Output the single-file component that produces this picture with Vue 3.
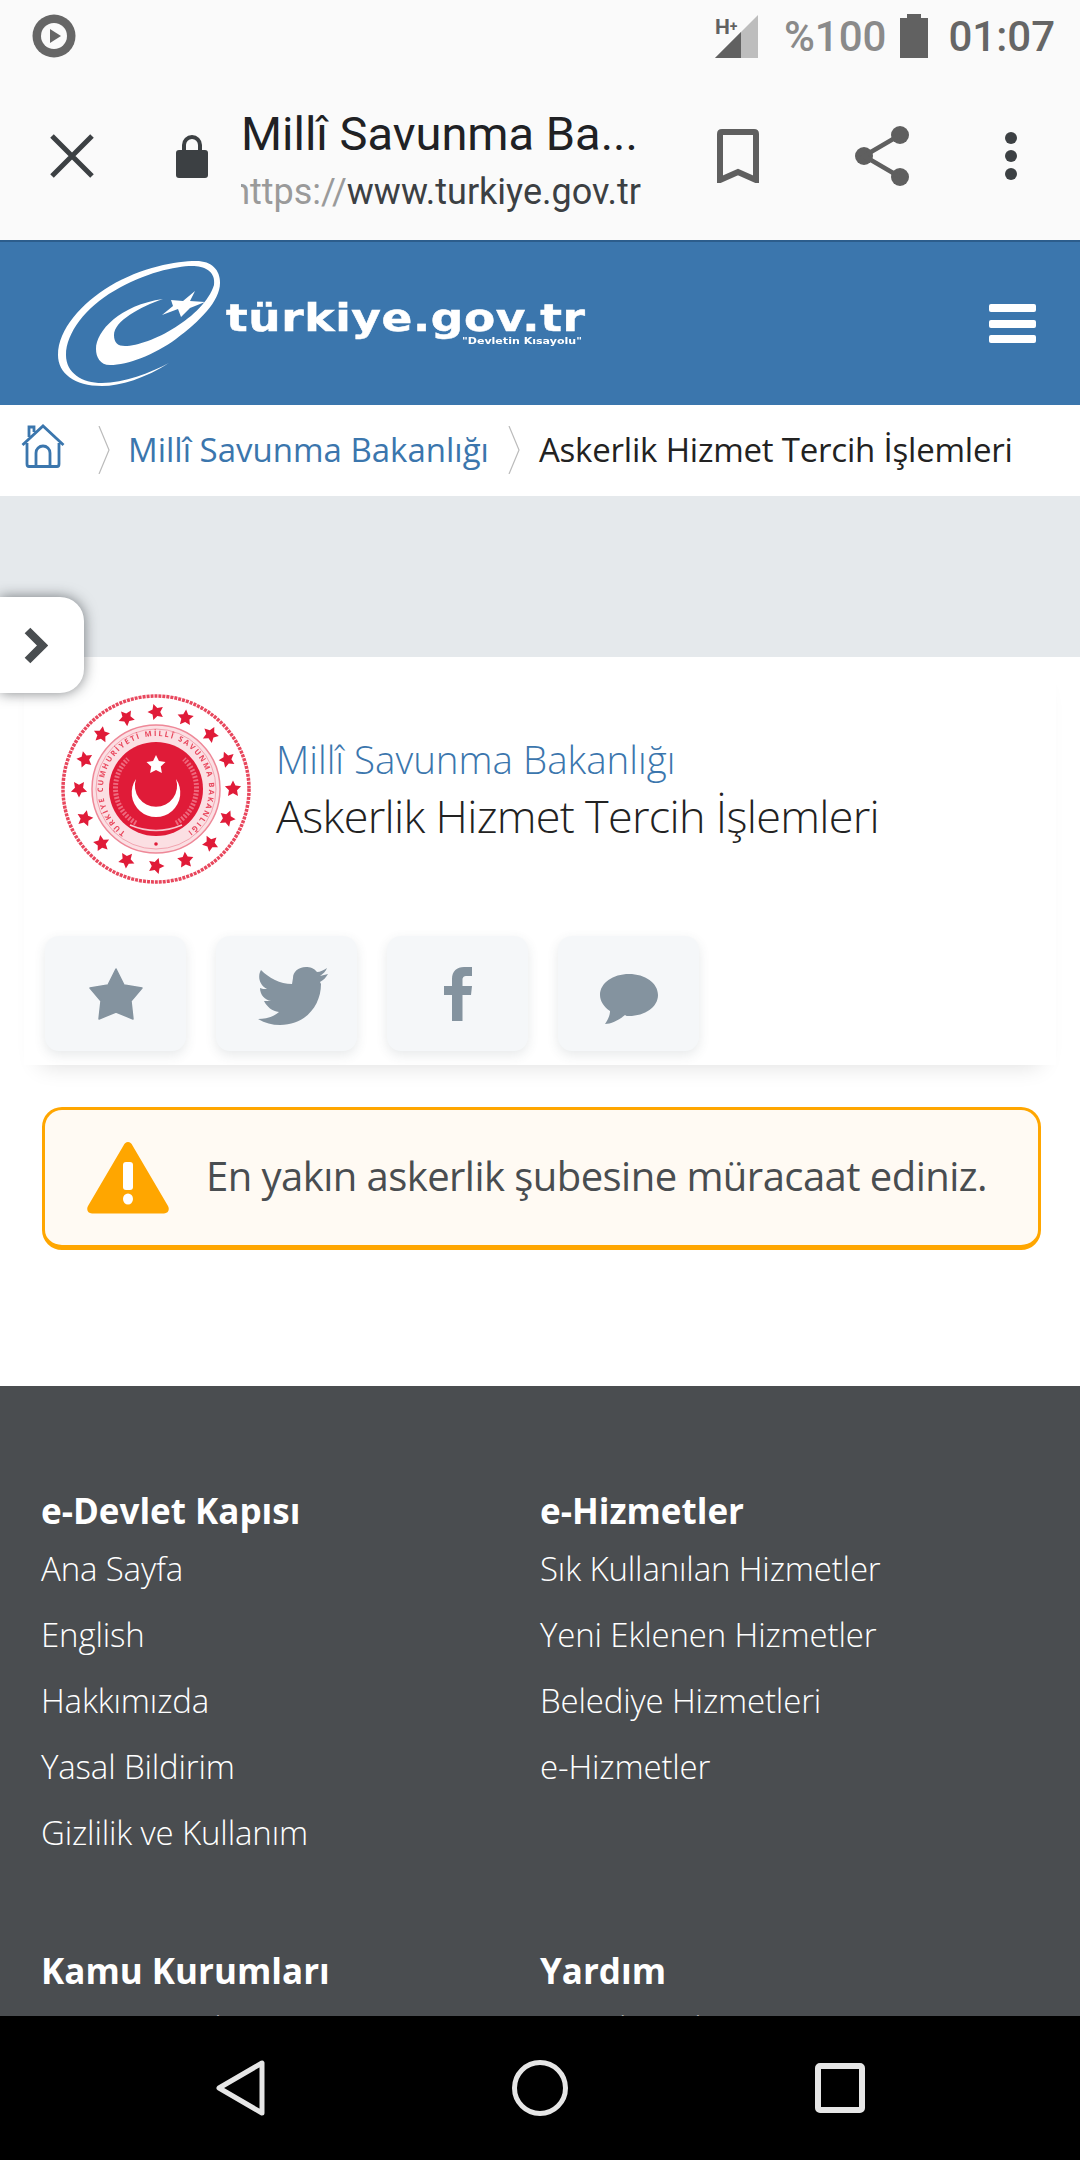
<template>
  <div class="screen">
    <!-- android status bar -->
    <div class="status-bar">
      <svg class="play-icon" width="44" height="44" viewBox="0 0 44 44">
        <circle cx="22" cy="22" r="21.5" fill="#666" />
        <circle cx="22" cy="22" r="13" fill="#fafafa" />
        <path d="M18 15 L29 22 L18 29 Z" fill="#666" />
      </svg>
      <div class="status-right">
        <svg width="43" height="43" viewBox="0 0 43 43">
          <path d="M43 0 V43 H0 Z" fill="#bdbdbd" />
          <path d="M26 17 V43 H0 Z" fill="#616161" />
          <text x="0" y="19" class="net-text">H<tspan class="net-plus" dy="-3">+</tspan></text>
        </svg>
        <span class="battery-text">%100</span>
        <svg class="battery" width="28" height="44" viewBox="0 0 28 44">
          <path d="M7 0 H21 V4 H28 V44 H0 V4 H7 Z" fill="#616161" />
        </svg>
        <span class="clock">01:07</span>
      </div>
    </div>

    <!-- custom tab toolbar -->
    <div class="toolbar">
      <svg class="close-icon" width="46" height="46" viewBox="0 0 46 46">
        <path d="M3 3 L43 43 M43 3 L3 43" stroke="#3c4043" stroke-width="5" fill="none" />
      </svg>
      <svg class="lock-icon" width="32" height="44" viewBox="0 0 32 44">
        <path d="M8 18 V11 A8 8 0 0 1 24 11 V18" stroke="#3c4043" stroke-width="4" fill="none" />
        <rect x="0" y="16" width="32" height="28" rx="3" fill="#3c4043" />
      </svg>
      <div class="tab-title">
        <div class="tab-name">Millî Savunma Ba...</div>
        <div class="tab-url"><span class="url-scheme">https://</span>www.turkiye.gov.tr</div>
      </div>
      <svg class="bookmark" width="42" height="54" viewBox="0 0 42 54">
        <path d="M3 51 V5 Q3 3 5 3 H37 Q39 3 39 5 V51 L21 43 Z" stroke="#5f5f5f" stroke-width="6" fill="none" stroke-linejoin="miter" />
      </svg>
      <svg class="share" width="54" height="60" viewBox="0 0 54 60">
        <circle cx="45" cy="9" r="9" fill="#5f5f5f" />
        <circle cx="9" cy="30" r="9" fill="#5f5f5f" />
        <circle cx="45" cy="51" r="9" fill="#5f5f5f" />
        <path d="M45 9 L9 30 L45 51" stroke="#5f5f5f" stroke-width="4.500" fill="none" />
      </svg>
      <svg class="dots" width="12" height="48" viewBox="0 0 12 48">
        <circle cx="6" cy="6" r="6" fill="#3c4043" />
        <circle cx="6" cy="24" r="6" fill="#3c4043" />
        <circle cx="6" cy="42" r="6" fill="#3c4043" />
      </svg>
    </div>

    <div class="page">
      <header class="site-header">
        <div class="logo">
          <svg width="162" height="125" viewBox="0 0 162 125">
            <path d="M111 102 C88 117 62 125 44 125 C16 125 0 112 0 94 C0 68 24 42 52 25 C84 6 118 0 138 0 C154 0 162 9 162 22 C162 40 142 60 118 78 C96 94 70 104 52 104 C42 104 38 96 38 88 C38 70 62 44 105 38 C82 46 56 60 56 74 C56 82 60 85 67 85 C92 85 146 56 156 24 C158 10 146 5 134 5 C118 5 86 12 56 30 C28 46 8 72 8 94 C8 112 24 122 44 122 C66 122 92 112 111 102 Z" fill="#fff" />
            <path d="M137 30 L132 40 L147 41 L132 47 L123 56 L120 48 L104 54 L115 45 L113 39 L125 40 Z" fill="#fff" />
          </svg>
          <div class="logo-text">
            <div class="logo-name">türkiye.gov.tr</div>
            <div class="logo-slogan">"Devletin Kısayolu"</div>
          </div>
        </div>
        <div class="hamburger">
          <span></span><span></span><span></span>
        </div>
      </header>

      <nav class="breadcrumb">
        <svg class="home-icon" width="44" height="44" viewBox="0 0 44 44">
          <path d="M1.500 21 L22 2 L42.500 21 M8 13 V3 H13 V8 M6 19 V40 Q6 42.500 8 42.500 H36 Q38 42.500 38 40 V19 M15 42 V29 A7 7 0 0 1 29 29 V42" stroke="#3b76ad" stroke-width="2.800" fill="none" />
        </svg>
        <svg class="crumb-sep" width="12" height="48" viewBox="0 0 12 48"><path d="M1 0 L11 24 L1 48" stroke="#bbb" stroke-width="1.200" fill="none" /></svg>
        <a class="crumb-link">Millî Savunma Bakanlığı</a>
        <svg class="crumb-sep sep-two" width="12" height="48" viewBox="0 0 12 48"><path d="M1 0 L11 24 L1 48" stroke="#bbb" stroke-width="1.200" fill="none" /></svg>
        <span class="crumb-current">Askerlik Hizmet Tercih İşlemleri</span>
      </nav>

      <div class="gray-band"></div>

      <section class="service">
        <div class="side-toggle">
          <svg width="24" height="37" viewBox="0 0 24 37">
            <path d="M3.500 3.500 L18.500 18.500 L3.500 33.500" stroke="#494d50" stroke-width="8" fill="none" />
          </svg>
        </div>

        <div class="service-head">
          <svg class="emblem" width="192" height="192" viewBox="0 0 192 192">
            <circle cx="96" cy="96" r="93" fill="#fff" stroke="#e8475d" stroke-width="3.500" stroke-dasharray="3 1" />
            <path v-for="s in outerStars" :key="s.id" :d="s.d" fill="#e01b38" />
            <circle cx="96" cy="96" r="64" fill="#fbdfe3" stroke="#ee8898" stroke-width="1.500" />
            <circle cx="96" cy="96" r="60" fill="none" stroke="#f2a5b1" stroke-width="1" />
            <defs>
              <path id="ring-text" d="M65.600 139.400 A53 53 0 1 1 126.400 139.400" />
            </defs>
            <text class="ring-text">
              <textPath href="#ring-text" textLength="266">TÜRKİYE CUMHURİYETİ MİLLÎ SAVUNMA BAKANLIĞI</textPath>
            </text>
            <circle cx="96" cy="151" r="1.800" fill="#e01b38" />
            <circle cx="96" cy="96" r="47" fill="#e01b38" />
            <path class="wreath" d="M76 130 A40 40 0 0 1 68 66" />
            <path class="wreath" d="M116 130 A40 40 0 0 0 124 66" />
            <path d="M70 132 Q96 143 122 132" stroke="#f7c6ce" stroke-width="1.500" fill="none" />
            <path :d="emblemStar" fill="#fff" />
            <path d="M76 86 A24.300 24.300 0 1 0 116 86 A21.100 21.100 0 1 1 76 86 Z" fill="#fff" />
          </svg>
          <div class="service-titles">
            <div class="agency">Millî Savunma Bakanlığı</div>
            <h1 class="service-name">Askerlik Hizmet Tercih İşlemleri</h1>
          </div>
        </div>

        <div class="action-row">
          <div class="action-btn">
            <svg width="54" height="52" viewBox="0 0 54 52">
              <path d="M27 1 L35 17 L53 20 L42 33 L44 51 L27 44 L10 51 L12 33 L1 20 L19 17 Z" fill="#84939f" stroke="#84939f" stroke-width="1.500" stroke-linejoin="round" />
            </svg>
          </div>
          <div class="action-btn">
            <svg class="bird" width="71" height="58" viewBox="0 0 71 58">
              <path d="M69 1 C66 3 62 5 59 5 C56 1 52 0 48 0 C40 0 35 5 35 11 L34 17 C22 17 11 11 3 3 C0 8 0 17 9 22 C6 22 4 22 2 21 C2 28 7 33 13 34 L6 34 C9 40 14 44 21 45 C17 49 9 52 0 52 C7 56 14 58 22 58 C48 58 63 38 63 17 L62 15 C66 13 68 10 70 7 L62 9 C65 7 68 4 69 1 Z" fill="#84939f" />
            </svg>
          </div>
          <div class="action-btn">
            <svg width="30" height="54" viewBox="0 0 30 54">
              <path d="M9 54 V28 H1 V19 H9 V12 C9 4 14 0 21 0 H29 V9 H24 C20.500 9 19.500 10.500 19.500 13 V19 H29 L28 28 H19.500 V54 Z" fill="#84939f" />
            </svg>
          </div>
          <div class="action-btn">
            <svg class="bubble" width="58" height="50" viewBox="0 0 58 50">
              <path d="M29 0 C45 0 58 9 58 21 C58 33 45 42 29 42 C27 42 26 42 25 41 C19 46 11 50 5 50 C8 46 10 41 10 37 C4 33 0 27 0 21 C0 9 13 0 29 0 Z" fill="#84939f" />
            </svg>
          </div>
        </div>
      </section>

      <div class="alert-wrap">
        <div class="alert">
          <svg class="alert-icon" width="82" height="72" viewBox="0 0 82 72">
            <path d="M41 0 C43 0 44.500 1.500 45.500 3.500 L81 64 C83 68 81 71.500 77 71.500 H5 C1 71.500 -1 68 1 64 L36.500 3.500 C37.500 1.500 39 0 41 0 Z" fill="#ffa600" />
            <rect x="36" y="20" width="10" height="28" rx="3" fill="#fff" />
            <ellipse cx="41" cy="57" rx="5" ry="5.500" fill="#fff" />
          </svg>
          <span class="alert-text">En yakın askerlik şubesine müracaat ediniz.</span>
        </div>
      </div>

      <footer class="site-footer">
        <div v-for="col in footerCols" :key="col.title" class="footer-col">
          <h4 class="footer-title">{{ col.title }}</h4>
          <a v-for="link in col.links" :key="link" class="footer-link">{{ link }}</a>
        </div>
      </footer>
    </div>

    <!-- android nav bar -->
    <div class="nav-bar">
      <svg width="50" height="56" viewBox="0 0 50 56">
        <path d="M46 3 V53 L3 28 Z" stroke="#e6e6e6" stroke-width="5" stroke-linejoin="round" fill="none" />
      </svg>
      <svg width="56" height="56" viewBox="0 0 56 56">
        <circle cx="28" cy="28" r="25.500" stroke="#e6e6e6" stroke-width="5" fill="none" />
      </svg>
      <svg width="50" height="50" viewBox="0 0 50 50">
        <rect x="3" y="3" width="44" height="44" rx="2" stroke="#e6e6e6" stroke-width="6" fill="none" />
      </svg>
    </div>
  </div>
</template>

<script setup>
const starPath = (cx, cy, r, rot = -90) => {
  let d = ''
  for (let i = 0; i < 10; i++) {
    const rad = i % 2 ? r * 0.5 : r
    const a = ((rot + i * 36) * Math.PI) / 180
    d += (i ? 'L' : 'M') + (cx + rad * Math.cos(a)).toFixed(2) + ' ' + (cy + rad * Math.sin(a)).toFixed(2) + ' '
  }
  return d + 'Z'
}

// emblemdeki 16 yildiz
const outerStars = Array.from({ length: 16 }, (_, i) => {
  const a = (i * 22.5 * Math.PI) / 180
  return {
    id: i,
    d: starPath(96 + 77 * Math.cos(a), 96 + 77 * Math.sin(a), 8.5, -90 + i * 22.5)
  }
})
const emblemStar = starPath(96, 72, 10)

const footerCols = [
  {
    title: 'e-Devlet Kapısı',
    links: ['Ana Sayfa', 'English', 'Hakkımızda', 'Yasal Bildirim', 'Gizlilik ve Kullanım']
  },
  {
    title: 'e-Hizmetler',
    links: ['Sık Kullanılan Hizmetler', 'Yeni Eklenen Hizmetler', 'Belediye Hizmetleri', 'e-Hizmetler']
  },
  { title: 'Kamu Kurumları', links: ['Tüm Kurumlar'] },
  { title: 'Yardım', links: ['Genel Yardım'] }
]
</script>

<style>
html, body {
  margin: 0;
  background: #fff;
}
</style>

<style scoped>
.screen {
  width: 1080px;
  height: 2160px;
  display: flex;
  flex-direction: column;
  overflow: hidden;
  font-family: "Open Sans", "Liberation Sans", sans-serif;
}
.status-bar {
  height: 72px;
  flex: none;
  display: flex;
  align-items: center;
  justify-content: space-between;
  padding: 0 25px 0 32px;
  background: #fafafa;
  font-family: Roboto, sans-serif;
}
.status-right {
  display: flex;
  align-items: center;
}
.net-text {
  font: 700 21px Roboto, sans-serif;
  fill: #616161;
}
.net-plus {
  font-size: 14px;
}
.battery-text {
  font-size: 42px;
  font-weight: 500;
  margin-left: 26px;
  color: #8a8a8a;
}
.battery {
  margin-left: 14px;
}
.clock {
  font-size: 42px;
  font-weight: 500;
  margin-left: 20px;
  color: #666;
}
.toolbar {
  height: 168px;
  flex: none;
  box-sizing: border-box;
  display: flex;
  align-items: center;
  padding-left: 49px;
  background: #fafafa;
}
.lock-icon {
  margin-left: 81px;
}
.tab-title {
  width: 400px;
  margin-left: 33px;
  margin-top: 8px;
  overflow: hidden;
  font-family: Roboto, sans-serif;
}
.tab-name {
  font-size: 47px;
  line-height: 56px;
  color: #202124;
  white-space: nowrap;
}
.tab-url {
  width: 400px;
  margin-top: 8px;
  font-size: 36px;
  line-height: 44px;
  color: #3c4043;
  white-space: nowrap;
  display: flex;
  justify-content: flex-end;
  overflow: hidden;
}
.url-scheme {
  color: #9a9a9a;
}
.bookmark {
  margin-left: 76px;
}
.share {
  margin-left: 96px;
}
.dots {
  margin-left: 96px;
}
.page {
  flex: 1;
  min-height: 0;
  overflow: hidden;
}
.site-header {
  height: 165px;
  box-sizing: border-box;
  display: flex;
  align-items: center;
  justify-content: space-between;
  padding: 0 44px 0 58px;
  background: #3b76ad;
  border-top: 2px solid #2c5d8c;
}
.logo {
  display: flex;
  align-items: center;
}
.logo-text {
  margin-left: 6px;
  margin-top: 2px;
  color: #fff;
  transform: scaleX(1.228);
  transform-origin: left center;
}
.logo-name {
  font-family: "DejaVu Sans", sans-serif;
  font-size: 37px;
  font-weight: 700;
  line-height: 34px;
  letter-spacing: 0.5px;
  white-space: nowrap;
  -webkit-text-stroke: 0.5px #fff;
}
.logo-slogan {
  font-family: "DejaVu Sans", sans-serif;
  font-size: 9px;
  font-weight: 700;
  line-height: 11px;
  text-align: right;
  padding-right: 3px;
}
.hamburger {
  display: flex;
  flex-direction: column;
  gap: 7.5px;
}
.hamburger span {
  display: block;
  width: 47px;
  height: 8px;
  border-radius: 2px;
  background: #fff;
}
.breadcrumb {
  height: 91px;
  box-sizing: border-box;
  display: flex;
  align-items: center;
  padding: 0 0 2px 21px;
  background: #fff;
  font-size: 33px;
  white-space: nowrap;
}
.home-icon {
  flex: none;
  margin-bottom: 8px;
}
.crumb-sep {
  margin-left: 33px;
}
.sep-two {
  margin-left: 19px;
}
.crumb-link {
  margin-left: 18px;
  color: #3b76ad;
}
.crumb-current {
  margin-left: 19px;
  color: #222;
  letter-spacing: -0.2px;
}
.gray-band {
  height: 161px;
  background: #e5e9ec;
}
.service {
  position: relative;
  height: 408px;
  box-sizing: border-box;
  padding-top: 36px;
  margin: 0 24px;
  background: #fff;
  box-shadow: 0 16px 22px -16px rgba(0, 0, 0, 0.14);
}
.side-toggle {
  position: absolute;
  left: -24px;
  top: -60px;
  width: 84px;
  height: 96px;
  box-sizing: border-box;
  display: flex;
  align-items: center;
  padding-left: 24px;
  background: #fff;
  border-radius: 0 24px 24px 0;
  box-shadow: 0 0 14px rgba(40, 45, 50, 0.6);
}
.service-head {
  display: flex;
  align-items: center;
  padding-left: 36px;
}
.emblem {
  flex: none;
  filter: blur(0.6px);
}
.ring-text {
  font: 700 7.5px "Open Sans", sans-serif;
  fill: #e8475d;
}
.wreath {
  fill: none;
  stroke: #ee6a7e;
  stroke-width: 5;
  stroke-dasharray: 2 1.500;
}
.service-titles {
  margin-left: 24px;
  margin-top: 2px;
  font-weight: 300;
}
.agency {
  font-size: 38.5px;
  line-height: 52px;
  color: #3b76ad;
}
.service-name {
  margin: 0;
  font-size: 45px;
  line-height: 62px;
  font-weight: 300;
  letter-spacing: -0.7px;
  color: #222;
  white-space: nowrap;
}
.action-row {
  display: flex;
  gap: 30px;
  margin-top: 51px;
  padding-left: 21px;
}
.action-btn {
  width: 141px;
  height: 115px;
  display: flex;
  align-items: center;
  justify-content: center;
  border-radius: 14px;
  background: #f5f7f9;
  box-shadow: 0 4px 12px rgba(60, 70, 80, 0.12);
}
.bird {
  margin-left: 14px;
  margin-top: 4px;
}
.bubble {
  margin-top: 10px;
}
.alert-wrap {
  height: 321px;
  box-sizing: border-box;
  padding: 42px 39px 0 42px;
  background: #fff;
}
.alert {
  height: 143px;
  box-sizing: border-box;
  display: flex;
  align-items: center;
  padding-left: 42px;
  border: 3px solid #ffa600;
  border-bottom-width: 5px;
  border-radius: 20px;
  background: #fffaf3;
}
.alert-icon {
  flex: none;
}
.alert-text {
  margin-left: 37px;
  margin-bottom: 5px;
  font-size: 40px;
  letter-spacing: -0.55px;
  color: #494d50;
  white-space: nowrap;
}
.site-footer {
  display: grid;
  grid-template-columns: 499px 1fr;
  row-gap: 80px;
  padding: 100px 0 0 41px;
  background: #4a4d50;
  height: 640px;
  box-sizing: border-box;
  color: #fff;
}
.footer-col {
  display: flex;
  flex-direction: column;
}
.footer-title {
  margin: 0;
  font-size: 35px;
  line-height: 50px;
  font-weight: 700;
}
.footer-link {
  font-size: 33px;
  font-weight: 300;
  line-height: 66px;
  letter-spacing: -0.15px;
}
.nav-bar {
  height: 144px;
  flex: none;
  display: flex;
  align-items: center;
  padding-left: 216px;
  background: #000;
}
.nav-bar svg:nth-child(2) {
  margin-left: 246px;
}
.nav-bar svg:nth-child(3) {
  margin-left: 247px;
}
</style>
